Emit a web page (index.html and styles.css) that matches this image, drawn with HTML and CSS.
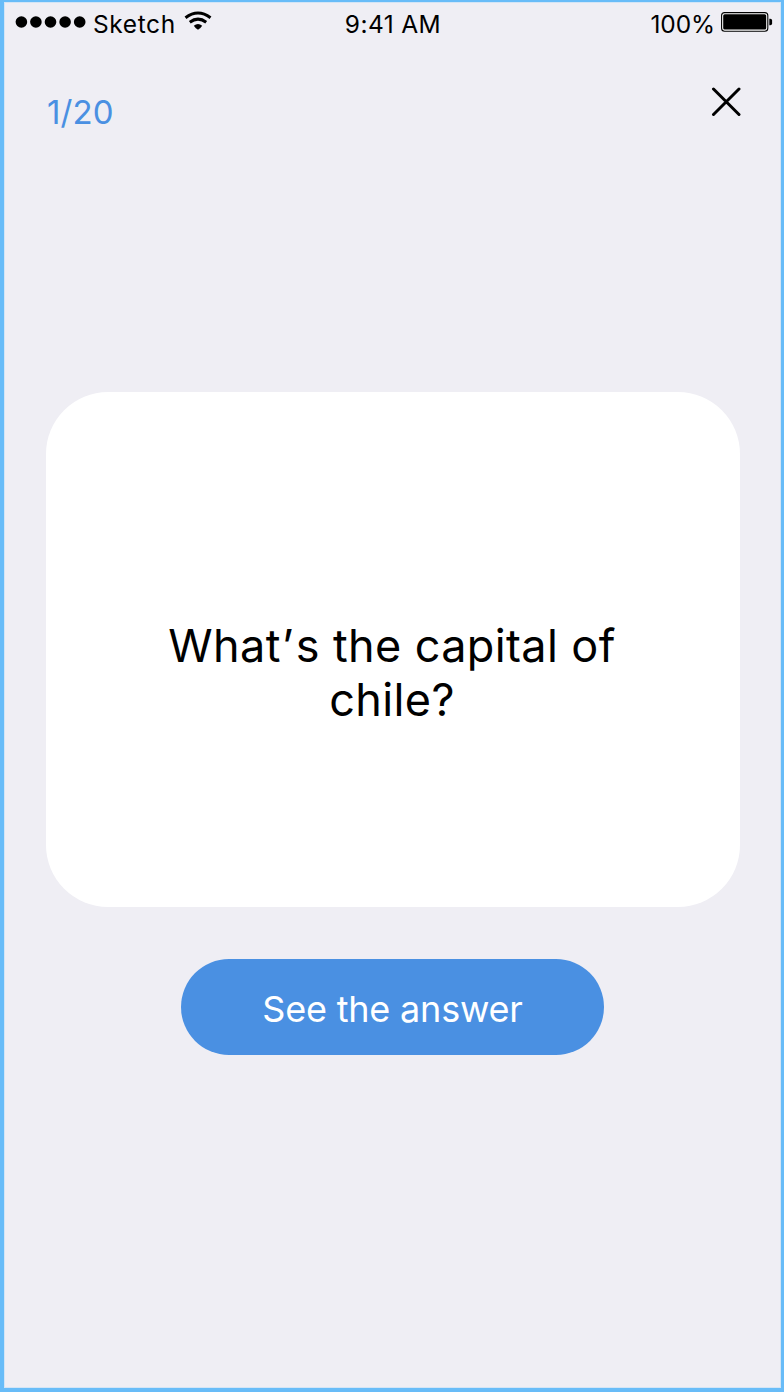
FILE: index.html
```html
<!DOCTYPE html>
<html lang="en">
<head>
<meta charset="utf-8">
<title>Flashcards</title>
<link rel="stylesheet" href="styles.css">
</head>
<body>
<div class="screen">
  <header class="status">
    <div class="status-left">
      <svg class="signal" width="72" height="14" viewBox="0 0 72 14"><circle cx="6.4" cy="7" r="5.8"/><circle cx="20.9" cy="7" r="5.8"/><circle cx="35.5" cy="7" r="5.8"/><circle cx="50.1" cy="7" r="5.8"/><circle cx="64.7" cy="7" r="5.8"/></svg>
      <span class="carrier">Sketch</span>
      <svg class="wifi" width="28" height="20" viewBox="0 0 28 20"><g fill="none" stroke="#000" stroke-width="3"><path d="M1.5 6.7Q14 -2.8 26.5 6.7"/><path d="M5.8 11.2Q14 5.1 22.2 11.2"/></g><path d="M9.8 14.8Q14 11.2 18.2 14.8Q16.8 17.2 14 18.8Q11.2 17.2 9.8 14.8Z"/></svg>
    </div>
    <span class="time">9:41 AM</span>
    <div class="status-right">
      <span class="percent">100%</span>
      <svg class="battery" width="52" height="20" viewBox="0 0 52 20"><rect x=".6" y=".6" width="46.2" height="18.6" rx="3" fill="#fff" stroke="#000" stroke-width="1.1"/><rect x="2.2" y="2.2" width="43" height="15.4" rx="1.5"/><path d="M48.3 6.7h1a1.8 1.8 0 0 1 1.8 1.8v3a1.8 1.8 0 0 1-1.8 1.8h-1z"/></svg>
    </div>
  </header>
  <nav class="toolbar">
    <span class="counter">1/20</span>
    <svg class="close" width="30" height="30" viewBox="0 0 30 30"><path d="M2.5 2L28 27.5M28 2L2.5 27.5" stroke="#000" stroke-width="3" stroke-linecap="round"/></svg>
  </nav>
  <main class="content">
    <section class="card">
      <p class="question">What<span class="apostrophe">’</span>s the capital of<br>chile?</p>
    </section>
    <button class="answer">See the answer</button>
  </main>
</div>
</body>
</html>
```
FILE: styles.css
```css
* { box-sizing: border-box; }
body { margin: 0; font-family: Inter, sans-serif; color: #000; }
.screen {
  width: 784px;
  height: 1392px;
  overflow: hidden;
  background: #efeef4;
  border: solid #68bcf8;
  border-width: 2px 3px 4px 4px;
  box-shadow: inset 0 0 0 1px #d3e5f6;
}
.status {
  display: grid;
  grid-template-columns: 1fr auto 1fr;
  height: 37px;
  padding: 7px 8px 0 11px;
  font-size: 24.5px;
  line-height: 30px;
}
.status-left, .status-right { display: flex; }
.status-right { justify-content: flex-end; }
.signal { margin-top: 6px; }
.carrier { margin-left: 6px; width: 82px; letter-spacing: 0.6px; }
.time { letter-spacing: 0.4px; margin-right: 2px; }
.percent { letter-spacing: -0.1px; }
.wifi { margin: 2px 0 0 9px; }
.battery { margin: 3px 0 0 6px; }
.toolbar {
  display: flex;
  justify-content: space-between;
  padding: 48px 40px 0 43px;
  height: 353px;
}
.counter { margin-top: 5px; font-size: 33px; line-height: 40px; color: #4a90e2; letter-spacing: 0.1px; }
.content { display: flex; flex-direction: column; align-items: center; padding-left: 1px; }
.card {
  width: 694px;
  height: 515px;
  padding: 227px 2px 0 0;
  border-radius: 62px;
  background: #fff;
  text-align: center;
}
.question { margin: 0; font-size: 45px; line-height: 54px; letter-spacing: 0.37px; }
.apostrophe { padding: 0 2px 0 1px; }
.answer {
  width: 423px;
  height: 96px;
  margin: 52px 1px 0 0;
  padding: 3px 0 0;
  border: 0;
  border-radius: 48px;
  background: #4a90e2;
  color: #fff;
  font: 36px/44px Inter, sans-serif;
  letter-spacing: -0.2px;
}
```
